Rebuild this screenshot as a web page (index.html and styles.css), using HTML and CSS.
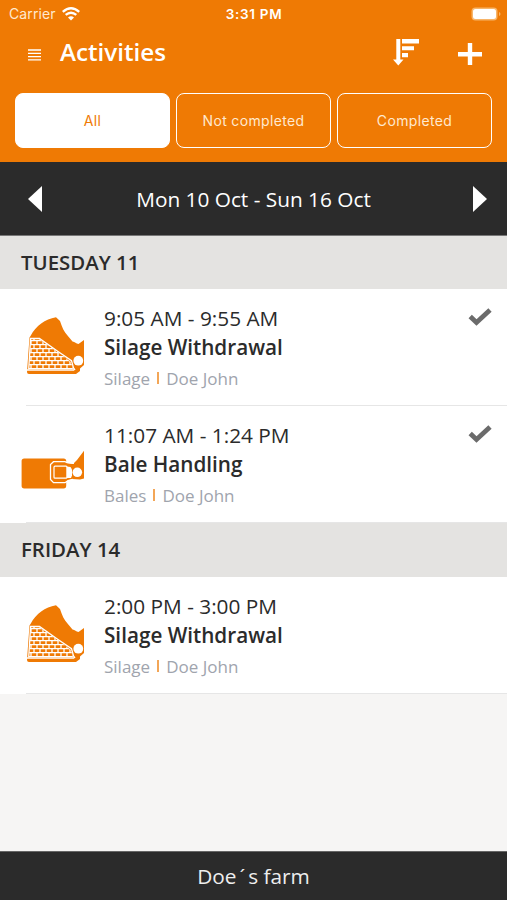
FILE: index.html
```html
<!DOCTYPE html>
<html lang="en">
<head>
    <meta charset="UTF-8">
    <meta name="viewport" content="width=device-width, initial-scale=1.0">
    <title>Activities</title>
    <link rel="stylesheet" href="styles.css">
</head>
<body>
    <svg class="defs" width="0" height="0">
        <defs>
            <pattern id="bricks" x="10" y="26" width="6" height="8" patternUnits="userSpaceOnUse">
                <path d="M0 .7H6M0 4.7H6M1 .7V4.7M4 4.7V8.7" fill="none" stroke="#fff" stroke-width="1.3"/>
            </pattern>
            <symbol id="silage" viewBox="0 0 68 64">
                <path d="M10.5 22C16 12 25 5 36 3.3L40 7C42 13 44 18 47.5 21.5L52.5 27.5C55 27.5 56 30 58.5 30L64 26V51L60 54.5V57L56 60H9Q7 60 7 58L9.500 23.500Z" fill="#ef7a04"/>
                <path d="M11 25L19 25L38 38L51 48L53 55H9Z" fill="url(#bricks)"/>
                <path d="M8.700 55.500L10.600 24.500L19.500 24.500L38 37.500L51.500 46.700L53.500 54L55 56" fill="none" stroke="#fff" stroke-width="1.300"/>
                <path d="M7 56H54" stroke="#fff" stroke-width="1.400"/>
                <circle cx="58.300" cy="46.700" r="4.900" fill="#fff"/>
            </symbol>
            <symbol id="bale" viewBox="0 0 68 64">
                <rect x="1.600" y="27.400" width="44.600" height="30" rx="2.600" fill="#ef7a04"/>
                <path d="M44 31.500L53 33L57 29L64 19.800V47.500L60 48.500L52 48L44 51Z" fill="#ef7a04"/>
                <path d="M54 32.300L47 31.600L45 30.700H33.500L30.500 33.500V48.500L33.500 51.700H45L48 49.700L53 48.500" fill="none" stroke="#fff" stroke-width="1.300"/>
                <rect x="34" y="35.200" width="13" height="12" rx="1" fill="#ef7a04" stroke="#fff" stroke-width="1.200"/>
                <path d="M46.700 35.500L50.500 36L52 38.500V44.500L51 47H46.700Z" fill="#fff"/>
                <circle cx="57.300" cy="41.300" r="4.800" fill="#fff"/>
            </symbol>
            <symbol id="check" viewBox="0 0 24 20">
                <path d="M2.200 9.500L8.500 15.500L22 3" fill="none" stroke="#6b6b6b" stroke-width="4.800"/>
            </symbol>
        </defs>
    </svg>

    <header class="header">
        <div class="status">
            <div class="carrier">
                <span>Carrier</span>
                <svg width="18" height="14" viewBox="0 0 18 14">
                    <path d="M.8 4.800Q9-2.200 17.200 4.800M3.700 7.900Q9 3.500 14.300 7.900" fill="none" stroke="#fff" stroke-width="2.400"/>
                    <path d="M6 10.400Q9 8 12 10.400L9 13.400Z" fill="#fff"/>
                </svg>
            </div>
            <div class="clock">3:31 PM</div>
            <svg class="battery" width="30" height="14" viewBox="0 0 30 14">
                <rect x=".5" y=".5" width="26" height="13" rx="4" fill="#f7b56a"/>
                <rect x="2" y="2" width="23" height="10" rx="2.5" fill="#fff"/>
                <path d="M28 5V9Q29.5 8.5 29.5 7T28 5" fill="#f7b56a"/>
            </svg>
        </div>
        <div class="titlebar">
            <svg class="menu" width="13" height="12" viewBox="0 0 13 12">
                <path d="M0 1H13M0 4.300H13M0 7.600H13M0 10.900H13" stroke="#fff" stroke-width="1.300"/>
            </svg>
            <h1>Activities</h1>
            <svg class="sort" width="28" height="28" viewBox="0 0 28 28">
                <path d="M3.300 1H7.300V21.500H10.500L5.300 27.500L0 21.500H3.300ZM9 1H26V5.500H9ZM9 8.300H21V12.300H9ZM9 15H15V19.300H9Z" fill="#fff"/>
            </svg>
            <svg class="plus" width="24" height="24" viewBox="0 0 24 24">
                <path d="M12 1V23M0 12.300H24" stroke="#fff" stroke-width="4.400"/>
            </svg>
        </div>
        <div class="tabs">
            <button class="tab active">All</button>
            <button class="tab">Not completed</button>
            <button class="tab">Completed</button>
        </div>
    </header>

    <div class="week">
        <svg width="14" height="26" viewBox="0 0 14 26"><path d="M14 0V26L0 13Z" fill="#fff"/></svg>
        <span>Mon 10 Oct - Sun 16 Oct</span>
        <svg class="next" width="14" height="26" viewBox="0 0 14 26"><path d="M0 0V26L14 13Z" fill="#fff"/></svg>
    </div>

    <main>
        <h2>TUESDAY 11</h2>
        <div class="activity">
            <svg class="icon"><use href="#silage"/></svg>
            <div class="info">
                <div class="time">9:05 AM - 9:55 AM</div>
                <div class="name">Silage Withdrawal</div>
                <div class="meta">Silage<i></i>Doe John</div>
            </div>
            <svg class="check"><use href="#check"/></svg>
        </div>
        <div class="activity">
            <svg class="icon"><use href="#bale"/></svg>
            <div class="info">
                <div class="time">11:07 AM - 1:24 PM</div>
                <div class="name">Bale Handling</div>
                <div class="meta">Bales<i></i>Doe John</div>
            </div>
            <svg class="check"><use href="#check"/></svg>
        </div>
        <h2>FRIDAY 14</h2>
        <div class="activity">
            <svg class="icon"><use href="#silage"/></svg>
            <div class="info">
                <div class="time">2:00 PM - 3:00 PM</div>
                <div class="name">Silage Withdrawal</div>
                <div class="meta">Silage<i></i>Doe John</div>
            </div>
        </div>
    </main>

    <footer>Doe<span class="accent">´</span>s farm</footer>
</body>
</html>
```
FILE: styles.css
```css
* {
    box-sizing: border-box;
}
body {
    margin: 0;
    height: 900px;
    display: flex;
    flex-direction: column;
    background: #f6f5f4;
    font-family: "Open Sans", sans-serif;
    color: #2b2b2b;
    overflow: hidden;
}
svg {
    display: block;
    flex-shrink: 0;
}
.defs {
    position: absolute;
}
.header {
    height: 162px;
    background: #ef7a04;
    color: #fff;
}
.status {
    display: grid;
    grid-template-columns: 1fr auto 1fr;
    align-items: center;
    height: 27px;
    padding: 0 6px 0 9px;
    font-family: Inter, sans-serif;
    font-size: 13.5px;
}
.carrier {
    display: flex;
    align-items: center;
    gap: 6px;
    font-size: 14px;
    letter-spacing: 0.1px;
    color: #ffe9cf;
}
.clock {
    margin-right: 2px;
    font-weight: 600;
    letter-spacing: 0.7px;
}
.battery {
    justify-self: end;
}
.titlebar {
    display: flex;
    align-items: center;
    height: 50px;
    padding: 0 25px 0 28px;
}
.menu {
    margin-top: 5px;
}
h1 {
    margin: -2px auto 0 19px;
    font-size: 24.2px;
    font-weight: 600;
}
.sort {
    margin-right: 37px;
}
.plus {
    margin-top: 3px;
}
.tabs {
    display: flex;
    gap: 6px;
    padding: 16px 15px 0;
}
.tab {
    flex: 1;
    height: 55px;
    padding: 0;
    border: 1.5px solid #fff;
    border-radius: 8px;
    background: none;
    color: #ffe9cf;
    font-family: Inter, sans-serif;
    font-size: 14px;
    letter-spacing: 0.35px;
}
.tab.active {
    background: #fff;
    color: #ef7a04;
}
.week {
    display: grid;
    grid-template-columns: 1fr auto 1fr;
    align-items: center;
    height: 74px;
    padding: 0 20px 0 28px;
    background: #2b2b2b;
    border-bottom: 1px solid #777;
    color: #fff;
    font-size: 20.8px;
}
.week span {
    margin-right: 8px;
}
.next {
    justify-self: end;
}
h2 {
    margin: 0;
    height: 53px;
    padding-left: 21px;
    background: #e4e3e1;
    font-size: 20.4px;
    font-weight: 600;
    line-height: 53px;
}
.activity {
    position: relative;
    display: flex;
    height: 117px;
    padding: 15px 14px 0 20px;
    background: #fff;
}
.activity::after {
    content: "";
    position: absolute;
    left: 26px;
    right: 0;
    bottom: 0;
    height: 1px;
    background: #e6e6e6;
}
.activity + h2 {
    height: 54px;
}
.icon {
    width: 68px;
    height: 64px;
    margin-top: 10px;
}
.info {
    flex: 1;
    margin-left: 16px;
}
.time, .name {
    height: 29px;
    font-size: 20.8px;
    line-height: 28px;
}
.name {
    font-size: 20.7px;
    font-weight: 600;
}
.meta {
    display: flex;
    align-items: center;
    height: 33px;
    color: #a0a4ad;
    font-size: 17px;
}
.meta i {
    width: 2px;
    height: 12px;
    margin: -2px 7px 0;
    background: #f3a657;
}
.check {
    width: 24px;
    height: 20px;
    margin: 3px 1px 0 0;
}
footer {
    height: 49px;
    margin-top: auto;
    background: #2b2b2b;
    border-top: 1px solid #666;
    color: #eee;
    font-size: 20.8px;
    line-height: 49px;
    text-align: center;
}
.accent {
    padding: 0 3px;
}
```
